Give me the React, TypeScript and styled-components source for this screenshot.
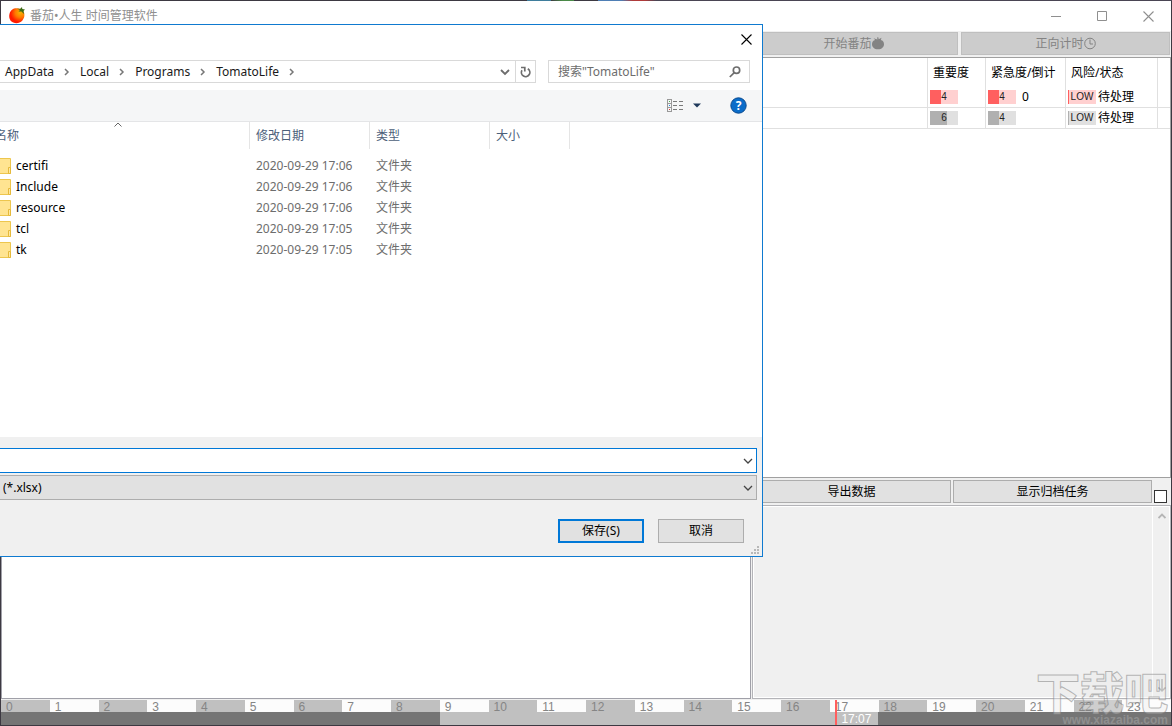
import React from "react";
import styled, { createGlobalStyle } from "styled-components";

const Global = createGlobalStyle`
  * { box-sizing: border-box; }
  body {
    margin: 0;
    font-family: "Noto Sans", "Noto Sans CJK SC", sans-serif;
    font-size: 12px;
    line-height: 16px;
    color: #000;
    background: #3d3942;
  }
  button, input, select { font: inherit; color: inherit; margin: 0; border-radius: 0; }
  table { border-collapse: separate; border-spacing: 0; table-layout: fixed; width: 100%; }
  th { font-weight: 400; text-align: left; }
`;

const Desktop = styled.div`
  position: relative;
  display: flex;
  flex-direction: column;
  min-height: 100vh;
  overflow: hidden;
  padding: 1px;
  background: #3d3942
    linear-gradient(
      90deg,
      #3d3942 45%, #3f7d9c 45%, #3f7d9c 47%, #3d3942 47%, #4a8a48 48%,
      #4a8a48 49%, #3d3942 49%, #3d3942 51%, #4f7fb5 51%,
      #4f7fb5 53%, #b03a3a 54%, #b03a3a 55%, #4a4554 56%
    )
    0 0 / 100% 1px no-repeat;
`;

const TitleBar = styled.header`
  display: flex;
  align-items: center;
  height: 30px;
  padding: 0 0 0 7px;
  background: #fff;
  color: #8f8f8f;
`;

const TitleText = styled.h1`
  flex: 1;
  margin: 0 0 0 4px;
  font-size: 12px;
  font-weight: 400;
`;

const CaptionButton = styled.button`
  display: flex;
  align-items: center;
  justify-content: center;
  width: 46px;
  height: 28px;
  padding: 0;
  border: 0;
  background: none;
  color: #8f8f8f;
`;

const Toolbar = styled.div`
  display: flex;
  justify-content: flex-end;
  gap: 3px;
  height: 26px;
  padding: 1px 1px 2px 0;
  background: #f0f0f0;
`;

const ToolButton = styled.button`
  display: flex;
  align-items: center;
  justify-content: center;
  flex: 0 0 209px;
  height: 23px;
  padding: 0;
  border: 1px solid #bfbfbf;
  background: #ccc;
  color: #838383;
`;

const TaskPane = styled.section`
  flex: 1 0 421px;
  border: 1px solid #a0a0a0;
  border-left-width: 0;
  background: #fff;
`;

const TaskHead = styled.th`
  height: 29px;
  padding: 0 0 0 5px;
  border-right: 1px solid #e0e0e0;
  white-space: nowrap;
  &:last-child { border-right: 0; }
`;

const TaskCell = styled.td`
  height: 21px;
  padding: 0 0 0 2px;
  border: 1px solid #e0e0e0;
  border-width: 0 1px 1px 0;
  &:last-child { border-right: 0; }
`;

const CellRow = styled.div`
  display: flex;
  align-items: center;
  height: 20px;
  gap: ${(p: { $gap?: number }) => p.$gap ?? 2}px;
  white-space: nowrap;
`;

const Meter = styled.span<{ $fill: number; $hot: boolean }>`
  width: 28px;
  height: 14px;
  font: 10px/14px "Liberation Sans", sans-serif;
  text-align: center;
  color: #222;
  background: linear-gradient(
    90deg,
    ${(p) => (p.$hot ? "#ff5f5f" : "#b0b0b0")} ${(p) => p.$fill}%,
    ${(p) => (p.$hot ? "#ffd0d0" : "#e0e0e0")} ${(p) => p.$fill}%
  );
`;

const ActionBar = styled.div`
  display: flex;
  justify-content: flex-end;
  gap: 2px;
  height: 27px;
  padding: 2px 4px 2px 0;
  background: #f0f0f0;
`;

const ActionButton = styled.button`
  flex: 0 0 199px;
  height: 23px;
  padding: 0;
  border: 1px solid #adadad;
  background: #e1e1e1;
`;

const ArchiveCheck = styled.input`
  appearance: none;
  align-self: flex-end;
  width: 13px;
  height: 13px;
  border: 1px solid #333;
  background: #fff;
  &:checked { background: #333; }
`;

const Panels = styled.div`
  display: flex;
  gap: 1px;
  height: 194px;
  background: #f0f0f0;
`;

const NotesPanel = styled.section`
  flex: 1;
  border: 1px solid #a0a0a8;
  background: #fff;
`;

const DetailPanel = styled.section`
  display: flex;
  flex: 0 0 419px;
  border: 1px solid #b4b4b8;
  background: #f0f0f0;
  box-shadow: inset 0 0 0 1px #fff;
`;

const DetailBody = styled.div`
  flex: 1;
`;

const ScrollTrack = styled.div`
  display: flex;
  flex-direction: column;
  justify-content: space-between;
  align-items: center;
  width: 18px;
  padding: 7px 0 5px;
  border-left: 1px solid #fff;
`;

const Timeline = styled.footer`
  position: relative;
  padding-top: 1px;
  background: #f0f0f0;
`;

const Hours = styled.div`
  display: grid;
  grid-template-columns: repeat(24, 1fr);
`;

const Hour = styled.span<{ $dark: boolean }>`
  height: 12px;
  padding-left: 5px;
  font: 12px/14px "Liberation Sans", sans-serif;
  color: #858585;
  background: ${(p) => (p.$dark ? "#c0c0c0" : "#fcfcfc")};
`;

const WorkBar = styled.div`
  height: 13px;
  background: linear-gradient(90deg, #757575 37.5%, #c0c0c0 37.5%, #c0c0c0 75%, #757575 75%);
`;

const NowMarker = styled.div`
  position: absolute;
  top: 1px;
  bottom: 0;
  display: flex;
  align-items: flex-end;
  padding-left: 4px;
  border-left: 2px solid #ff5f5f;
  font: 12px/12px "Liberation Sans", sans-serif;
  color: #fff;
`;

const Dialog = styled.form`
  position: absolute;
  top: 24px;
  left: -6px;
  display: flex;
  flex-direction: column;
  width: calc(100% - 403px);
  border: 1px solid #0f7ad0;
  background: #fff;
`;

const DialogTitle = styled.div`
  display: flex;
  justify-content: flex-end;
  height: 35px;
`;

const DialogClose = styled.button`
  display: flex;
  align-items: center;
  justify-content: center;
  width: 31px;
  height: 29px;
  padding: 0;
  border: 0;
  background: none;
`;

const AddressRow = styled.div`
  display: flex;
  gap: 12px;
  height: 30px;
  padding-right: 12px;
`;

const AddressBox = styled.nav`
  display: flex;
  flex: 1;
  align-items: center;
  height: 23px;
  padding-left: 9px;
  border: 1px solid #d9d9d9;
`;

const Crumb = styled.a`
  color: #1a1a1a;
  text-decoration: none;
`;

const CrumbArrow = styled.span`
  display: flex;
  justify-content: center;
  width: 26px;
  color: #777;
`;

const Spacer = styled.span`
  flex: 1;
`;

const AddressButton = styled.button<{ $divided?: boolean }>`
  display: flex;
  align-items: center;
  justify-content: center;
  width: 20px;
  height: 21px;
  padding: 0;
  border: 0;
  border-left: ${(p) => (p.$divided ? "1px solid #d9d9d9" : "0")};
  background: none;
  color: #6d6d6d;
`;

const SearchBox = styled.label`
  display: flex;
  align-items: center;
  flex: 0 0 202px;
  min-width: 0;
  height: 23px;
  padding: 0 8px 0 9px;
  border: 1px solid #d9d9d9;
`;

const SearchInput = styled.input`
  flex: 1;
  min-width: 0;
  padding: 0;
  border: 0;
  outline: 0;
  background: none;
  &::placeholder { color: #6d6d6d; opacity: 1; }
`;

const CommandBar = styled.div`
  display: flex;
  align-items: center;
  justify-content: flex-end;
  height: 32px;
  padding-right: 15px;
  border-bottom: 1px solid #e4e5e7;
  background: #f5f6f7;
`;

const IconButton = styled.button<{ $gap?: number }>`
  display: flex;
  align-items: center;
  margin-left: ${(p) => p.$gap ?? 0}px;
  padding: 0;
  border: 0;
  background: none;
`;

const FileArea = styled.div`
  height: 315px;
`;

const FileTable = styled.table`
  thead::after { content: ""; display: block; height: 6px; }
`;

const FileHead = styled.th`
  position: relative;
  height: 27px;
  padding: 0 0 0 6px;
  border-right: 1px solid #e5e5e5;
  color: #4c607a;
  &:first-child { padding-left: 0; }
  &:last-child { border-right: 0; }
`;

const SortMark = styled.svg`
  position: absolute;
  top: 0;
  left: 47%;
`;

const FileCell = styled.td`
  height: 21px;
  padding: 0 0 0 6px;
  color: #6d6d6d;
  white-space: nowrap;
  &:first-child { padding-left: 0; color: #000; }
`;

const FileName = styled.span`
  display: flex;
  align-items: center;
  gap: 5px;
`;

const DialogFoot = styled.div`
  position: relative;
  display: flex;
  flex-direction: column;
  gap: 2px;
  padding: 11px 5px 13px 0;
  background: #f0f0f0;
`;

const Combo = styled.div<{ $active?: boolean }>`
  position: relative;
  display: flex;
  height: 25px;
  border: 1px solid ${(p) => (p.$active ? "#0078d7" : "#adadad")};
  background: ${(p) => (p.$active ? "#fff" : "#e1e1e1")};
`;

const NameInput = styled.input`
  flex: 1;
  min-width: 0;
  padding: 0 20px 0 8px;
  border: 0;
  outline: 0;
  background: none;
`;

const TypeSelect = styled.select`
  appearance: none;
  flex: 1;
  min-width: 0;
  padding: 0 20px 0 7px;
  border: 0;
  outline: 0;
  background: none;
`;

const ComboArrow = styled.span`
  position: absolute;
  top: 8px;
  right: 3px;
  display: flex;
  pointer-events: none;
  color: #444;
`;

const DialogButtons = styled.div`
  display: flex;
  justify-content: flex-end;
  gap: 14px;
  padding: 17px 13px 0 0;
`;

const DialogButton = styled.button<{ $primary?: boolean }>`
  width: 86px;
  height: 24px;
  padding: 0;
  border: ${(p) => (p.$primary ? "2px solid #0078d7" : "1px solid #adadad")};
  background: #e1e1e1;
`;

const Grip = styled.svg`
  position: absolute;
  right: 3px;
  bottom: 2px;
`;

const Watermark = styled.div`
  position: absolute;
  right: 4px;
  bottom: 0;
  text-align: right;
  pointer-events: none;
`;

const WatermarkName = styled.div`
  font: 900 44px/46px "Noto Sans CJK SC", sans-serif;
  color: rgba(235, 235, 235, 0.35);
  -webkit-text-stroke: 1px rgba(120, 120, 120, 0.5);
`;

const WatermarkUrl = styled.div`
  font: bold 12px/12px "Liberation Sans", sans-serif;
  color: rgba(150, 150, 150, 0.8);
`;

const Chevron = () => (
  <svg width="10" height="8" viewBox="0 0 10 8" fill="none" stroke="currentColor" strokeWidth="1.3">
    <path d="M1 2 5 6 9 2" />
  </svg>
);

const CrumbChevron = () => (
  <svg width="6" height="8" viewBox="0 0 6 8" fill="none" stroke="currentColor" strokeWidth="1.5">
    <path d="M1 1 4 4 1 7" />
  </svg>
);

const Cross = () => (
  <svg width="11" height="11" viewBox="0 0 11 11" fill="none" stroke="currentColor" strokeWidth="1.1">
    <path d="M.5.5 10.5 10.5M10.5.5.5 10.5" />
  </svg>
);

const TomatoLogo = () => (
  <svg width="18" height="18" viewBox="0 0 18 18">
    <defs>
      <radialGradient id="skin" cx="0.72" cy="0.3" r="0.7">
        <stop offset="0" stopColor="#f5b400" />
        <stop offset="0.45" stopColor="#ff7a00" />
        <stop offset="0.9" stopColor="#ff1a00" />
      </radialGradient>
    </defs>
    <path d="M6 1.5C9 .8 13 1 15 3.500C17.500 7 16.500 12 13 14.800C10 17 5 16.500 2.500 13.500C0 10 1 3.500 6 1.500Z" fill="url(#skin)" />
    <path d="M9 1.500 12 2 14 0 14.300 2 17 2.500 15.500 4 16 7 13.500 4.500 10.500 4.500 12 3Z" fill="#3d6b16" />
  </svg>
);

const TomatoGlyph = () => (
  <svg width="12" height="13" viewBox="0 0 12 13" fill="currentColor">
    <path d="M5.500 2.600 5 .6 6.300.3 6.700 2.200 9.500.8 8.800 3C11 3.300 12 5 12 7.200 12 10.100 9.800 12.200 6 12.200S0 10.100 0 7.200C0 5 1 3.300 3.200 3L1.500 1.300Z" />
  </svg>
);

const ClockGlyph = () => (
  <svg width="12" height="13" viewBox="0 0 12 13" fill="none" stroke="currentColor">
    <circle cx="6" cy="6.500" r="5.300" />
    <path d="M6 2.500V7H9" />
  </svg>
);

const Folder = () => (
  <svg width="16" height="16" viewBox="0 0 16 16">
    <path d="M0 .5H15.500V15.500H0Z" fill="#ffe491" stroke="#edc64e" />
    <path d="M13.500 9.500H15.500V15.500H13.500Z" fill="#ffe9a2" stroke="#e5b93b" />
  </svg>
);

const ViewIcon = () => (
  <svg width="17" height="13" viewBox="0 0 17 13" fill="none" shapeRendering="crispEdges">
    <path d="M.5.5H4.500V12.500H.5ZM.5 4.500H4.500M.5 8.500H4.500" stroke="#999" />
    <path d="M6 2.500H10M12 2.500H16M6 6.500H10M12 6.500H16M6 10.500H10M12 10.500H16" stroke="#7a7a7a" />
    <path d="M2 2H3V3H2Z" fill="#4caf50" />
    <path d="M2 6H3V7H2Z" fill="#1e88e5" />
    <path d="M2 10H3V11H2Z" fill="#e53935" />
  </svg>
);

const crumbs = ["AppData", "Local", "Programs", "TomatoLife"];

const files = [
  ["certifi", "2020-09-29 17:06"],
  ["Include", "2020-09-29 17:06"],
  ["resource", "2020-09-29 17:06"],
  ["tcl", "2020-09-29 17:05"],
  ["tk", "2020-09-29 17:05"],
];

const tasks = [
  { importance: 4, urgency: 4, countdown: "0", hot: true },
  { importance: 6, urgency: 4, countdown: "", hot: false },
];

const SaveDialog = () => (
  <Dialog role="dialog" aria-label="另存为" onSubmit={(e) => e.preventDefault()}>
    <DialogTitle>
      <DialogClose type="button" aria-label="关闭"><Cross /></DialogClose>
    </DialogTitle>
    <AddressRow>
      <AddressBox aria-label="路径">
        {crumbs.map((c) => (
          <React.Fragment key={c}>
            <Crumb href="#">{c}</Crumb>
            <CrumbArrow><CrumbChevron /></CrumbArrow>
          </React.Fragment>
        ))}
        <Spacer />
        <AddressButton type="button" aria-label="历史记录">
          <svg width="10" height="8" viewBox="0 0 10 8" fill="none" stroke="currentColor" strokeWidth="1.800"><path d="M1 2 5 6 9 2" /></svg>
        </AddressButton>
        <AddressButton type="button" aria-label="刷新" $divided>
          <svg width="11" height="12" viewBox="0 0 11 12" fill="none" stroke="currentColor" strokeWidth="1.700">
            <path d="M7.800 2.800A4.200 4.200 0 1 1 2 4.300" />
            <path d="M1 1.500H4.800V5.500" />
          </svg>
        </AddressButton>
      </AddressBox>
      <SearchBox>
        <SearchInput type="text" placeholder={'搜索"TomatoLife"'} aria-label="搜索" />
        <svg width="12" height="12" viewBox="0 0 12 12" fill="none" stroke="#6d6d6d" strokeWidth="1.700">
          <circle cx="7.500" cy="4.200" r="3.200" />
          <path d="M5 6.800.8 11" />
        </svg>
      </SearchBox>
    </AddressRow>
    <CommandBar>
      <IconButton type="button" aria-label="视图"><ViewIcon /></IconButton>
      <IconButton type="button" aria-label="更多选项" $gap={9}>
        <svg width="8" height="5" viewBox="0 0 8 5"><path d="M0 .5H8L4 4.500Z" fill="#1e395b" /></svg>
      </IconButton>
      <IconButton type="button" aria-label="帮助" $gap={29}>
        <svg width="17" height="17" viewBox="0 0 17 17">
          <circle cx="8.500" cy="8.500" r="7.700" fill="#0a6cc9" stroke="#0a4a8f" />
          <text x="8.500" y="13" textAnchor="middle" fontSize="12" fontWeight="700" fill="#fff">?</text>
        </svg>
      </IconButton>
    </CommandBar>
    <FileArea>
      <FileTable>
        <colgroup>
          <col style={{ width: 255 }} /><col style={{ width: 120 }} /><col style={{ width: 120 }} />
          <col style={{ width: 80 }} /><col />
        </colgroup>
        <thead>
          <tr>
            <FileHead>
              名称
              <SortMark width="8" height="5" viewBox="0 0 8 5" fill="none" stroke="#666"><path d="M.5 4.500 4 1 7.500 4.500" /></SortMark>
            </FileHead>
            <FileHead>修改日期</FileHead>
            <FileHead>类型</FileHead>
            <FileHead>大小</FileHead>
            <FileHead />
          </tr>
        </thead>
        <tbody>
          {files.map(([name, date]) => (
            <tr key={name}>
              <FileCell><FileName><Folder />{name}</FileName></FileCell>
              <FileCell>{date}</FileCell>
              <FileCell>文件夹</FileCell>
              <FileCell />
              <FileCell />
            </tr>
          ))}
        </tbody>
      </FileTable>
    </FileArea>
    <DialogFoot>
      <Combo $active>
        <NameInput type="text" aria-label="文件名" />
        <ComboArrow><Chevron /></ComboArrow>
      </Combo>
      <Combo>
        <TypeSelect aria-label="保存类型"><option>(*.xlsx)</option></TypeSelect>
        <ComboArrow><Chevron /></ComboArrow>
      </Combo>
      <DialogButtons>
        <DialogButton type="submit" $primary>保存(S)</DialogButton>
        <DialogButton type="button">取消</DialogButton>
      </DialogButtons>
      <Grip width="8" height="8" viewBox="0 0 8 8" fill="#b8b8b8">
        <path d="M6 0H8V2H6ZM3 3H5V5H3ZM6 3H8V5H6ZM0 6H2V8H0ZM3 6H5V8H3ZM6 6H8V8H6Z" />
      </Grip>
    </DialogFoot>
  </Dialog>
);

export default function App() {
  const now = 17 + 7 / 60;
  return (
    <Desktop>
      <Global />
      <TitleBar>
        <TomatoLogo />
        <TitleText>番茄•人生 时间管理软件</TitleText>
        <CaptionButton aria-label="最小化">
          <svg width="10" height="11" viewBox="0 0 10 11" stroke="currentColor"><path d="M0 5.500H10" /></svg>
        </CaptionButton>
        <CaptionButton aria-label="最大化">
          <svg width="10" height="10" viewBox="0 0 10 10" fill="none" stroke="currentColor"><path d="M.5.5H9.500V9.500H.5Z" /></svg>
        </CaptionButton>
        <CaptionButton aria-label="关闭"><Cross /></CaptionButton>
      </TitleBar>
      <Toolbar>
        <ToolButton disabled>开始番茄<TomatoGlyph /></ToolButton>
        <ToolButton disabled>正向计时<ClockGlyph /></ToolButton>
      </Toolbar>
      <TaskPane>
        <table>
          <colgroup>
            <col /><col style={{ width: 58 }} /><col style={{ width: 80 }} />
            <col style={{ width: 92 }} /><col style={{ width: 12 }} />
          </colgroup>
          <thead>
            <tr>
              <TaskHead />
              <TaskHead>重要度</TaskHead>
              <TaskHead>紧急度/倒计</TaskHead>
              <TaskHead>风险/状态</TaskHead>
              <TaskHead />
            </tr>
          </thead>
          <tbody>
            {tasks.map((t, i) => (
              <tr key={i}>
                <TaskCell />
                <TaskCell>
                  <CellRow><Meter $fill={t.importance * 10} $hot={t.hot}>{t.importance}</Meter></CellRow>
                </TaskCell>
                <TaskCell>
                  <CellRow $gap={6}><Meter $fill={t.urgency * 10} $hot={t.hot}>{t.urgency}</Meter>{t.countdown}</CellRow>
                </TaskCell>
                <TaskCell>
                  <CellRow><Meter $fill={4} $hot={t.hot}>LOW</Meter>待处理</CellRow>
                </TaskCell>
                <TaskCell />
              </tr>
            ))}
          </tbody>
        </table>
      </TaskPane>
      <ActionBar>
        <ActionButton>导出数据</ActionButton>
        <ActionButton>显示归档任务</ActionButton>
        <ArchiveCheck type="checkbox" aria-label="显示归档任务" />
      </ActionBar>
      <Panels>
        <NotesPanel />
        <DetailPanel>
          <DetailBody />
          <ScrollTrack>
            <svg width="8" height="6" viewBox="0 0 8 6" fill="none" stroke="#b5b5b5" strokeWidth="1.800"><path d="M.5 5 4 1.500 7.500 5" /></svg>
            <svg width="8" height="14" viewBox="0 0 8 14" fill="none" stroke="#a5a5a5" strokeWidth="1.500"><path d="M4 0V12M.5 8.500 4 12 7.500 8.500" /></svg>
          </ScrollTrack>
        </DetailPanel>
      </Panels>
      <Timeline>
        <Hours>
          {Array.from({ length: 24 }, (_, h) => (
            <Hour key={h} $dark={h % 2 === 0}>{h}</Hour>
          ))}
        </Hours>
        <WorkBar />
        <NowMarker style={{ left: `${(now / 24) * 100}%` }}>17:07</NowMarker>
      </Timeline>
      <SaveDialog />
      <Watermark>
        <WatermarkName>下载吧</WatermarkName>
        <WatermarkUrl>www.xiazaiba.com</WatermarkUrl>
      </Watermark>
    </Desktop>
  );
}
